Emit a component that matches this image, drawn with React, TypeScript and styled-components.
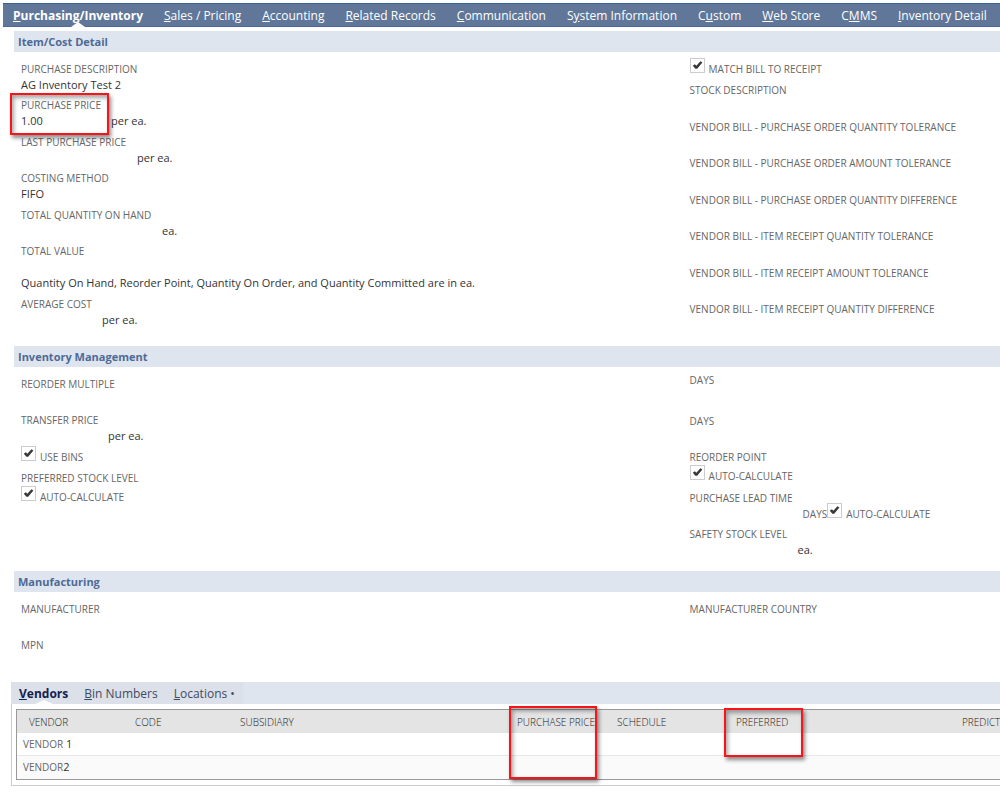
import React from "react";
import styled, { createGlobalStyle, css } from "styled-components";

const GlobalStyle = createGlobalStyle`
  * { box-sizing: border-box; }
  body {
    margin: 0;
    background: #fff;
    color: #333;
    font-family: "Open Sans", "Noto Sans", sans-serif;
    font-size: 11px;
    overflow-x: hidden;
  }
`;

const Page = styled.main`
  padding: 3px 0 6px 0;
  overflow: hidden;
`;

const TabBar = styled.nav`
  display: flex;
  gap: 1px;
  height: 24px;
  margin: 0 0 4px 3px;
  background: #607799;
  border-top: 1px solid #3f6190;
  border-bottom: 1px solid #4b6a96;
`;

const Tab = styled.a<{ $active?: boolean }>`
  position: relative;
  flex: none;
  padding: 0 10px;
  color: #fff;
  font-size: 12px;
  font-weight: ${(p) => (p.$active ? 700 : 400)};
  line-height: 24px;
  white-space: nowrap;
  text-decoration: none;
  ${(p) =>
    p.$active &&
    css`
      &::after {
        content: "";
        position: absolute;
        left: 50%;
        bottom: -1px;
        margin-left: -7px;
        border: 7px solid transparent;
        border-top: 0;
        border-bottom: 5px solid #fff;
      }
    `}
`;

const Section = styled.section`
  margin-left: 14px;
`;

const SectionTitle = styled.h2`
  margin: 0;
  padding: 0 4px;
  height: 21px;
  background: #dfe5ef;
  color: #4d6a96;
  font-size: 11px;
  font-weight: 700;
  line-height: 21px;
`;

const SectionBody = styled.div`
  display: grid;
  grid-template-columns: minmax(0, 28fr) minmax(0, 13fr);
  align-items: start;
  padding: 9px 0 14px 7px;
`;

const Column = styled.div<{ $minHeight?: number; $raised?: boolean }>`
  display: flex;
  flex-direction: column;
  justify-content: space-between;
  gap: 5px;
  min-height: ${(p) => p.$minHeight ?? 0}px;
  margin-top: ${(p) => (p.$raised ? -4 : 0)}px;
`;

const FieldBox = styled.div<{ $height: number }>`
  position: relative;
  min-height: ${(p) => p.$height}px;
`;

const Caption = styled.div`
  color: #666;
  font-size: 10px;
  line-height: 16px;
  white-space: nowrap;
`;

const Value = styled.div`
  display: flex;
  height: 15px;
  line-height: 15px;
  white-space: nowrap;
`;

const Slot = styled.span<{ $width: number }>`
  flex: none;
  width: ${(p) => p.$width}px;
`;

const Note = styled.p`
  margin: 0;
  line-height: 16px;
`;

const CheckLabel = styled.label<{ $below?: boolean }>`
  display: flex;
  align-items: flex-end;
  gap: 4px;
  height: 16px;
  margin-top: ${(p) => (p.$below ? 3 : 0)}px;
  color: #666;
  font-size: 10px;
  line-height: 16px;
  white-space: nowrap;
`;

const CheckBox = styled.span`
  position: relative;
  flex: none;
  width: 15px;
  height: 15px;
  margin-bottom: 4px;
`;

const CheckInput = styled.input`
  appearance: none;
  display: block;
  width: 15px;
  height: 15px;
  margin: 0;
  border: 1px solid #ccc;
  background: #fff;
  &:not(:checked) + svg { display: none; }
`;

const CheckMark = styled.svg`
  position: absolute;
  inset: 0;
  pointer-events: none;
`;

const Highlight = styled.span<{ $top: number; $left: number; $width: number; $height: number }>`
  position: absolute;
  z-index: 1;
  top: ${(p) => p.$top}px;
  left: ${(p) => p.$left}px;
  width: ${(p) => p.$width}px;
  height: ${(p) => p.$height}px;
  border: 2px solid #fa1418;
  box-shadow: 2px 3px 4px rgba(0, 0, 0, 0.45), inset 2px 3px 4px rgba(0, 0, 0, 0.35);
  pointer-events: none;
`;

const SubTabs = styled.nav`
  display: flex;
  height: 22px;
  margin-left: 11px;
  background: #dfe5ef;
`;

const SubTabGroup = styled.div`
  display: flex;
  background: #dce0e8;
`;

const SubTab = styled.a<{ $active?: boolean }>`
  position: relative;
  padding: 0 8px;
  color: ${(p) => (p.$active ? "#14214f" : "#3f4b63")};
  font-size: 12px;
  font-weight: ${(p) => (p.$active ? 700 : 400)};
  line-height: 23px;
  white-space: nowrap;
  text-decoration: none;
  ${(p) =>
    p.$active &&
    css`
      &::after {
        content: "";
        position: absolute;
        left: 50%;
        bottom: 0;
        margin-left: -9px;
        border: 9px solid transparent;
        border-top: 0;
        border-bottom: 4px solid #fff;
      }
    `}
`;

const Panel = styled.div`
  margin-left: 11px;
  padding: 5px 0 5px 4px;
  border: 1px solid #ccc;
  border-width: 0 0 1px 1px;
`;

const Grid = styled.table`
  width: 100%;
  table-layout: fixed;
  border-collapse: separate;
  border-spacing: 0;
  border: 1px solid #999;
  border-right: 0;
`;

const Col = styled.col<{ $width?: number }>`
  width: ${(p) => (p.$width ? `${p.$width}px` : "auto")};
`;

const Head = styled.th`
  position: relative;
  height: 23px;
  padding: 0 0 0 12px;
  background: #e4e4e4;
  color: #222;
  font-size: 10px;
  font-weight: 300;
  text-align: left;
  white-space: nowrap;
`;

const Cell = styled.td<{ $shaded?: boolean }>`
  height: 23px;
  padding: 0 0 0 6px;
  border-bottom: 1px solid ${(p) => (p.$shaded ? "#fafafa" : "#e8e8e8")};
  background: ${(p) => (p.$shaded ? "#fafafa" : "#fff")};
  line-height: 16px;
  white-space: nowrap;
`;

const VendorName = styled.span`
  color: #666;
  font-size: 10px;
`;

const Hot = ({ text, at = 0 }: { text: string; at?: number }) => (
  <>
    {text.slice(0, at)}
    <u>{text[at]}</u>
    {text.slice(at + 1)}
  </>
);

const Check = ({ label, below }: { label: string; below?: boolean }) => (
  <CheckLabel $below={below}>
    <CheckBox>
      <CheckInput type="checkbox" defaultChecked />
      <CheckMark viewBox="0 0 15 15">
        <path d="M2.8 7.8 4.8 6.2 6.4 7.8 10.4 3.2 12.4 4.4 7.2 10.8 5.4 10.8Z" fill="#383838" />
      </CheckMark>
    </CheckBox>
    {label}
  </CheckLabel>
);

type FieldProps = {
  label: string;
  value?: string;
  unit?: string;
  slot?: number;
  height?: number;
  children?: React.ReactNode;
};

const Field = ({ label, value, unit, slot = 0, height = 31, children }: FieldProps) => (
  <FieldBox $height={height}>
    <Caption>{label}</Caption>
    {unit ? (
      <Value>
        <Slot $width={slot}>{value}</Slot>
        {unit}
      </Value>
    ) : (
      value && <Value>{value}</Value>
    )}
    {children}
  </FieldBox>
);

const tabs: [string, number][] = [
  ["Purchasing/Inventory", 0],
  ["Sales / Pricing", 0],
  ["Accounting", 0],
  ["Related Records", 0],
  ["Communication", 0],
  ["System Information", 1],
  ["Custom", 1],
  ["Web Store", 0],
  ["CMMS", 1],
  ["Inventory Detail", 0],
];

const tolerances = [
  "PURCHASE ORDER QUANTITY TOLERANCE",
  "PURCHASE ORDER AMOUNT TOLERANCE",
  "PURCHASE ORDER QUANTITY DIFFERENCE",
  "ITEM RECEIPT QUANTITY TOLERANCE",
  "ITEM RECEIPT AMOUNT TOLERANCE",
  "ITEM RECEIPT QUANTITY DIFFERENCE",
];

export default function App() {
  return (
    <Page>
      <GlobalStyle />
      <TabBar>
        {tabs.map(([name, at], i) => (
          <Tab key={name} href="#" $active={i === 0}>
            <Hot text={name} at={at} />
          </Tab>
        ))}
      </TabBar>

      <Section>
        <SectionTitle>Item/Cost Detail</SectionTitle>
        <SectionBody>
          <Column $minHeight={266}>
            <Field label="PURCHASE DESCRIPTION" value="AG Inventory Test 2" />
            <Field label="PURCHASE PRICE" value="1.00" unit="per ea." slot={90}>
              <Highlight $top={-4} $left={-11} $width={99} $height={42} />
            </Field>
            <Field label="LAST PURCHASE PRICE" unit="per ea." slot={116} />
            <Field label="COSTING METHOD" value="FIFO" />
            <Field label="TOTAL QUANTITY ON HAND" unit="ea." slot={141} />
            <Field label="TOTAL VALUE" height={26} />
            <Note>
              Quantity On Hand, Reorder Point, Quantity On Order, and Quantity Committed are in ea.
            </Note>
            <Field label="AVERAGE COST" unit="per ea." slot={81} />
          </Column>
          <Column $minHeight={271}>
            <Check label="MATCH BILL TO RECEIPT" />
            <Field label="STOCK DESCRIPTION" />
            {tolerances.map((t) => (
              <Field key={t} label={`VENDOR BILL - ${t}`} />
            ))}
          </Column>
        </SectionBody>
      </Section>

      <Section>
        <SectionTitle>Inventory Management</SectionTitle>
        <SectionBody>
          <Column $minHeight={129}>
            <Field label="REORDER MULTIPLE" />
            <Field label="TRANSFER PRICE" unit="per ea." slot={87} />
            <Check label="USE BINS" />
            <Field label="PREFERRED STOCK LEVEL">
              <Check label="AUTO-CALCULATE" below />
            </Field>
          </Column>
          <Column $minHeight={185} $raised>
            <Field label="DAYS" height={35} />
            <Field label="DAYS" />
            <Field label="REORDER POINT">
              <Check label="AUTO-CALCULATE" below />
            </Field>
            <Field label="PURCHASE LEAD TIME">
              <Value>
                <Slot $width={113} />
                <Caption>DAYS</Caption>
                <Check label="AUTO-CALCULATE" />
              </Value>
            </Field>
            <Field label="SAFETY STOCK LEVEL" unit="ea." slot={108} />
          </Column>
        </SectionBody>
      </Section>

      <Section>
        <SectionTitle>Manufacturing</SectionTitle>
        <SectionBody>
          <Column>
            <Field label="MANUFACTURER" />
            <Field label="MPN" />
          </Column>
          <Column>
            <Field label="MANUFACTURER COUNTRY" />
          </Column>
        </SectionBody>
      </Section>

      <SubTabs>
        <SubTabGroup>
          <SubTab href="#" $active>
            <Hot text="Vendors" />
          </SubTab>
          <SubTab href="#">
            <Hot text="Bin Numbers" />
          </SubTab>
          <SubTab href="#">
            <Hot text="Locations •" />
          </SubTab>
        </SubTabGroup>
      </SubTabs>
      <Panel>
        <Grid>
          <colgroup>
            <Col $width={106} />
            <Col $width={105} />
            <Col $width={277} />
            <Col $width={100} />
            <Col $width={119} />
            <Col $width={226} />
            <Col />
          </colgroup>
          <thead>
            <tr>
              <Head>VENDOR</Head>
              <Head>CODE</Head>
              <Head>SUBSIDIARY</Head>
              <Head>
                PURCHASE PRICE
                <Highlight $top={-4} $left={4} $width={88} $height={73} />
              </Head>
              <Head>SCHEDULE</Head>
              <Head>
                PREFERRED
                <Highlight $top={-2} $left={0} $width={79} $height={49} />
              </Head>
              <Head>PREDICT</Head>
            </tr>
          </thead>
          <tbody>
            <tr>
              <Cell colSpan={7}>
                <VendorName>VENDOR</VendorName> 1
              </Cell>
            </tr>
            <tr>
              <Cell colSpan={7} $shaded>
                <VendorName>VENDOR</VendorName>2
              </Cell>
            </tr>
          </tbody>
        </Grid>
      </Panel>
    </Page>
  );
}
